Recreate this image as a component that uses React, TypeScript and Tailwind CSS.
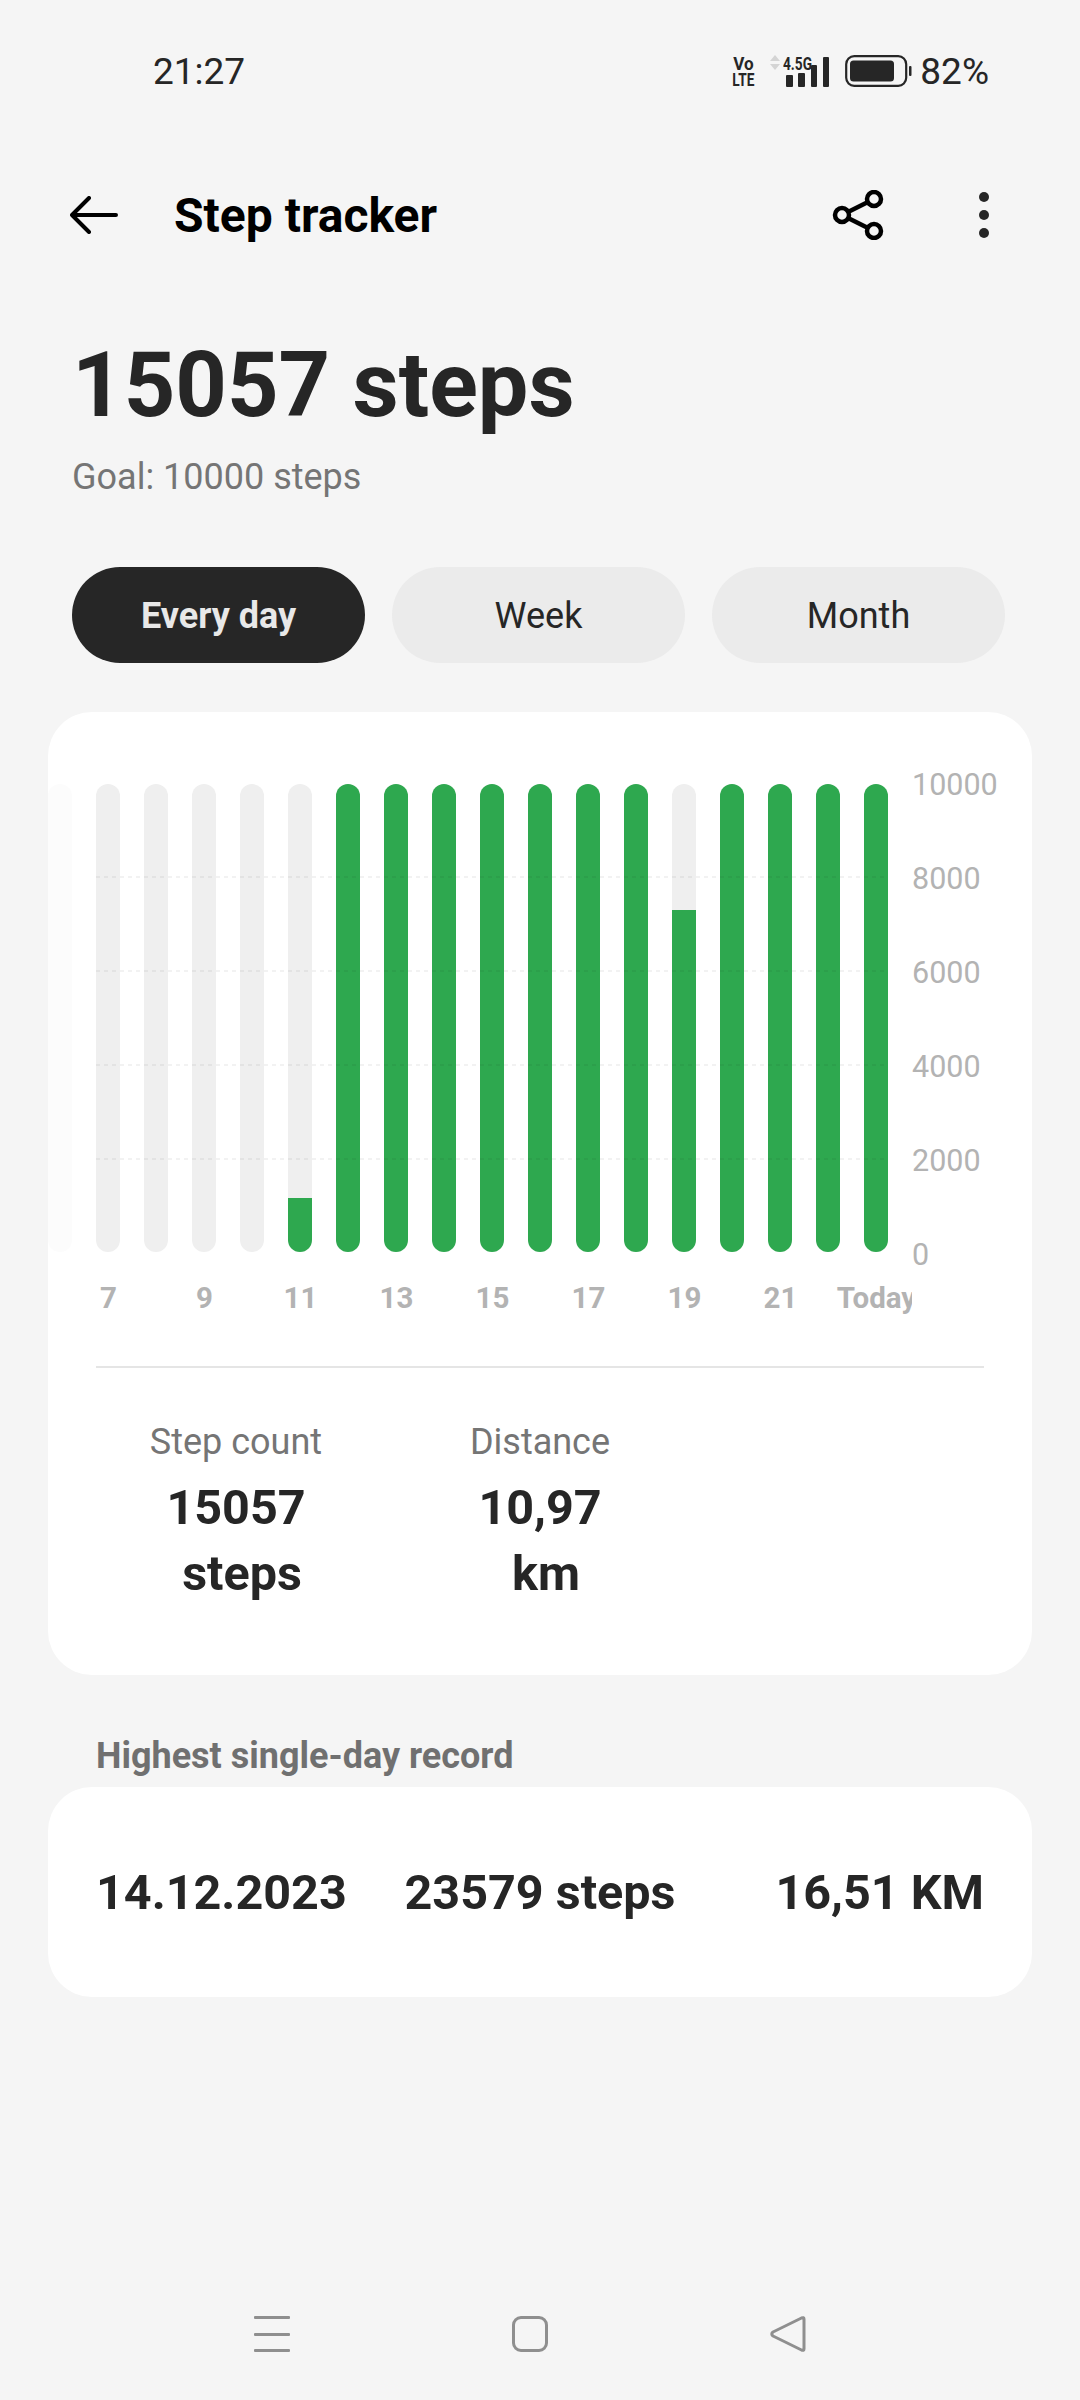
import { ReactNode } from "react";

// Chart data: fill is the green part of each bar in pixels out of 468.
const bars: number[] = [0, 0, 0, 0, 0, 54, 468, 468, 468, 468, 468, 468, 468, 342, 468, 468, 468, 468];
const dayLabels = ["7", "9", "11", "13", "15", "17", "19", "21", "Today"];
const axisLabels = ["10000", "8000", "6000", "4000", "2000", "0"];
const gridLines = [92, 186, 280, 374];

/**
 * Stat is one column below the chart.
 */
function Stat({ label, value, unit, width }: { label: string; value: string; unit: string; width: string }) {
  return (
    <div className={`flex flex-col items-center ${width}`}>
      <span className="text-[36px] leading-[48px] text-[#757575]">{label}</span>
      <span className="mt-[9px] text-[48.5px] font-bold leading-[66px] text-[#262626]">{value}</span>
      <span className="pl-[12px] text-[48.5px] font-bold leading-[66px] text-[#262626]">{unit}</span>
    </div>
  );
}

function Tab({ active, children }: { active?: boolean; children: ReactNode }) {
  return (
    <div
      className={
        active
          ? "flex h-[96px] w-[293px] items-center justify-center rounded-[48px] bg-[#262626] pt-[2px] text-[36px] font-bold text-[#e8e8e8]"
          : "flex h-[96px] w-[293px] items-center justify-center rounded-[48px] bg-[#ebebeb] pt-[2px] text-[36px] text-[#262626]"
      }
    >
      {children}
    </div>
  );
}

function StatusBar() {
  return (
    <div className="flex h-[142px] items-center pl-[153px] pr-[91px] text-[#262626]">
      <span className="text-[37px] leading-none">21:27</span>
      <div className="ml-auto flex items-center">
        <div className="flex w-[24px] flex-col items-center font-bold">
          <span className="h-[16px] origin-center scale-x-[0.9] text-[19px] leading-[16px]">Vo</span>
          <span className="h-[15px] origin-center scale-x-[0.72] text-[19px] leading-[15px]">LTE</span>
        </div>
        <div className="relative ml-[14px] h-[32px] w-[60px]">
          <svg width="60" height="32" viewBox="0 0 60 32" className="absolute left-0 top-0">
            <path d="M1 6 L6 0 L11 6 Z M1 9 L11 9 L6 15 Z" fill="#d4d4d4" />
            <rect x="17" y="20" width="7" height="12" rx="1" fill="#262626" />
            <rect x="29" y="18" width="7" height="14" rx="1" fill="#262626" />
            <rect x="42" y="10" width="6" height="22" rx="1" fill="#262626" />
            <rect x="54" y="2" width="6" height="30" rx="1" fill="#262626" />
          </svg>
          <span className="absolute left-[14px] top-[0px] origin-left scale-x-[0.72] text-[19px] font-bold leading-[17px]">4.5G</span>
        </div>
        <svg width="68" height="32" viewBox="0 0 68 32" className="ml-[16px]">
          <rect x="1.2" y="1.2" width="60" height="29.6" rx="8" fill="none" stroke="#262626" strokeWidth="2.2" />
          <rect x="5" y="5.5" width="44" height="21" rx="3.5" fill="#262626" />
          <rect x="64" y="11" width="2.5" height="10" rx="1" fill="#262626" />
        </svg>
        <span className="ml-[7px] text-[37px] leading-none">82%</span>
      </div>
    </div>
  );
}

function Header() {
  return (
    <div className="flex h-[146px] items-center pl-[70px] pr-[91px]">
      <svg width="48" height="38" viewBox="0 0 48 38" fill="none" stroke="#000" strokeWidth="4" strokeLinecap="round" strokeLinejoin="round">
        <path d="M46 19 H2 M19 2 L2 19 L19 36" />
      </svg>
      <span className="ml-[56px] pt-[2px] text-[48px] font-bold leading-none text-black">Step tracker</span>
      <svg width="54" height="50" viewBox="0 0 54 50" fill="none" stroke="#000" strokeWidth="4.5" className="ml-auto">
        <circle cx="11" cy="25" r="7" />
        <circle cx="43" cy="9" r="7" />
        <circle cx="43" cy="41" r="7" />
        <path d="M17 22 L37 12 M17 28 L37 38" />
      </svg>
      <div className="ml-[94px] flex flex-col gap-[8px]">
        <div className="h-[10px] w-[10px] rounded-full bg-[#262626]" />
        <div className="h-[10px] w-[10px] rounded-full bg-[#262626]" />
        <div className="h-[10px] w-[10px] rounded-full bg-[#262626]" />
      </div>
    </div>
  );
}

function Chart() {
  return (
    <div className="relative flex h-[468px]">
      <div className="flex gap-[24px]">
        {bars.map((fill, i) => (
          <div
            key={i}
            className={`relative h-[468px] w-[24px] overflow-hidden rounded-[12px] ${i === 0 ? "bg-[#fcfcfc]" : "bg-[#efefef]"}`}
          >
            <div className="absolute bottom-0 w-full bg-[#2ea84f]" style={{ height: fill }} />
          </div>
        ))}
      </div>
      {gridLines.map((top) => (
        <div
          key={top}
          className="absolute left-[48px] h-[2px] w-[792px] bg-[repeating-linear-gradient(to_right,rgba(0,0,0,0.05)_0_4px,transparent_4px_8px)]"
          style={{ top }}
        />
      ))}
      <div className="ml-[24px] mt-[1px] flex h-[470px] flex-col justify-between">
        {axisLabels.map((label) => (
          <span key={label} className="h-0 text-[30.5px] leading-[0] text-[#b3b3b3]">
            {label}
          </span>
        ))}
      </div>
    </div>
  );
}

function NavBar() {
  return (
    <div className="mt-auto flex h-[84px] items-start pl-[254px]">
      <svg width="36" height="36" viewBox="0 0 36 36" fill="#8f8f8f">
        <rect y="0" width="36" height="3" rx="1" />
        <rect y="17" width="36" height="3" rx="1" />
        <rect y="33" width="36" height="3" rx="1" />
      </svg>
      <div className="ml-[222px] h-[36px] w-[36px] rounded-[9px] border-[3px] border-[#8f8f8f]" />
      <svg width="36" height="36" viewBox="0 0 36 36" fill="none" stroke="#8f8f8f" strokeWidth="3" strokeLinejoin="round" className="ml-[222px]">
        <path d="M34 3 L34 33 Q34 35 31.5 34 L3 20 Q0.5 18 3 16 L31.5 2 Q34 1 34 3 Z" />
      </svg>
    </div>
  );
}

export default function App() {
  return (
    <div className="flex h-[2400px] w-[1080px] flex-col overflow-hidden bg-[#f5f5f5] font-['Roboto',sans-serif]">
      <StatusBar />
      <Header />

      <div className="mt-[44px] pl-[72px] text-[90px] font-bold leading-[108px] text-[#262626]">15057 steps</div>
      <div className="mt-[13px] pl-[72px] text-[36px] leading-[48px] text-[#757575]">Goal: 10000 steps</div>

      <div className="mt-[66px] flex gap-[27px] pl-[72px]">
        <Tab active>Every day</Tab>
        <Tab>Week</Tab>
        <Tab>Month</Tab>
      </div>

      <div className="mx-[48px] mt-[49px] h-[963px] rounded-[44px] bg-white pt-[72px]">
        <Chart />
        <div className="mt-[28px] h-[36px] w-[864px] overflow-hidden pl-[12px]">
          <div className="grid w-[864px] grid-cols-[repeat(9,96px)]">
            {dayLabels.map((label) => (
              <span key={label} className="whitespace-nowrap pl-[1px] text-center text-[29.5px] font-bold leading-[36px] text-[#b3b3b3]">
                {label}
              </span>
            ))}
          </div>
        </div>
        <div className="mx-[48px] mt-[50px] h-[2px] bg-[#e5e5e5]" />
        <div className="mt-[50px] flex pl-[48px]">
          <Stat label="Step count" value="15057" unit="steps" width="w-[280px]" />
          <Stat label="Distance" value="10,97" unit="km" width="w-[328px]" />
        </div>
      </div>

      <div className="mt-[57px] pl-[96px] text-[36px] font-bold leading-[48px] text-[#707070]">Highest single-day record</div>

      <div className="mx-[48px] mt-[7px] grid h-[210px] grid-cols-[1fr_auto_1fr] items-center rounded-[44px] bg-white px-[48px] pt-[3px] text-[48.5px] font-bold text-[#262626]">
        <span>14.12.2023</span>
        <span>23579 steps</span>
        <span className="justify-self-end">16,51 KM</span>
      </div>

      <NavBar />
    </div>
  );
}
